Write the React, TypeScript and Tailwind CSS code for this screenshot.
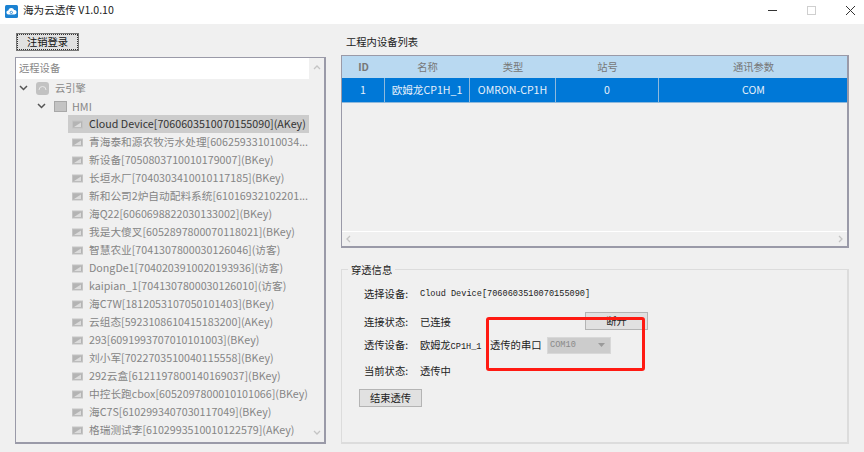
import React from "react";

const devices = [
  "青海泰和源农牧污水处理[606259331010034...",
  "新设备[7050803710010179007](BKey)",
  "长垣水厂[7040303410010117185](BKey)",
  "新和公司2炉自动配料系统[61016932102201...",
  "海Q22[6060698822030133002](BKey)",
  "我是大傻叉[6052897800070118021](BKey)",
  "智慧农业[7041307800030126046](访客)",
  "DongDe1[7040203910020193936](访客)",
  "kaipian_1[7041307800030126010](访客)",
  "海C7W[1812053107050101403](BKey)",
  "云组态[5923108610415183200](AKey)",
  "293[6091993707010101003](BKey)",
  "刘小军[7022703510040115558](BKey)",
  "292云盒[6121197800140169037](BKey)",
  "中控长跑cbox[6052097800010101066](BKey)",
  "海C7S[6102993407030117049](BKey)",
  "格瑞测试李[6102993510010122579](AKey)",
];

const ui = { fontFamily: '"Noto Sans CJK SC","Noto Sans",sans-serif' };
const mono = { fontFamily: '"Liberation Mono","Noto Sans CJK SC",monospace' };

function DevIcon() {
  return (
    <svg width="11" height="9" viewBox="0 0 11 9" className="shrink-0">
      <rect x="0" y="0.5" width="11" height="8" fill="#c4c4c4" />
      <rect x="1" y="1.5" width="9" height="6" fill="#b4b4b4" />
      <path d="M2 7 L9 2.5 V7 Z" fill="#dcdcdc" />
    </svg>
  );
}

function Chevron() {
  return (
    <svg width="9" height="6" viewBox="0 0 9 6" className="shrink-0">
      <path d="M1 1 L4.5 4.5 L8 1" fill="none" stroke="#555" strokeWidth="1.5" />
    </svg>
  );
}

const cols = "grid grid-cols-[43px_85px_86px_103px_189px]";

export default function App() {
  return (
    <div className="w-[864px] h-[452px] overflow-hidden bg-[#f0f0f0] flex flex-col text-[#222]" style={ui}>
      <div className="h-6 bg-white flex items-center shrink-0 pl-[5px]">
        <svg width="13" height="13" viewBox="0 0 13 13" className="shrink-0 -mt-[2px]">
          <rect width="13" height="13" rx="1.5" fill="#1b82d2" />
          <path d="M3.5 9.5 a2 2 0 0 1 -.2 -4 a3 3 0 0 1 5.8 -.6 a2.3 2.3 0 0 1 .4 4.6 Z" fill="#fff" />
          <circle cx="6.3" cy="7.4" r="1.2" fill="none" stroke="#1b82d2" strokeWidth=".8" />
        </svg>
        <span className="ml-[5px] text-[10.6px] leading-none text-[#222] -mt-[3px] whitespace-nowrap">海为云透传 V1.0.10</span>
        <div className="ml-auto flex items-center mr-[9px] -mt-[4px]">
          <div className="w-[9px] h-px bg-[#333]" />
          <div className="w-[9px] h-[9px] border border-[#cfcfcf] ml-[30px]" />
          <svg width="9" height="9" viewBox="0 0 9 9" className="ml-[30px]">
            <path d="M0 0 L9 9 M9 0 L0 9" stroke="#333" strokeWidth="1" />
          </svg>
        </div>
      </div>

      <div className="flex-1 flex min-h-0 pl-[15px] pb-2">
        <div className="w-[311px] shrink-0 flex flex-col pt-[9px]">
          <button className="ml-px w-[63px] h-[18px] bg-[#e1e1e1] border border-[#777] outline-1 outline-dotted outline-[#333] -outline-offset-2 text-[10.3px] leading-none text-[#111] flex items-center justify-center">
            注销登录
          </button>
          <div className="mt-[6px] flex-1 border border-[#9a9aa8] border-b-2 border-r-2 flex min-h-0">
            <div className="w-[293px] flex flex-col">
              <div className="h-[21px] bg-white flex items-center pl-[3px] text-[10.3px] text-[#888] leading-none shrink-0">远程设备</div>
              <div className="flex items-center h-[18px] pl-[3px] text-[10.3px] text-[#888]">
                <Chevron />
                <svg width="13" height="13" viewBox="0 0 13 13" className="ml-[8px]">
                  <rect width="13" height="13" rx="3" fill="#c2c2c2" />
                  <path d="M3 8 a3.5 3.5 0 0 1 7 0" fill="none" stroke="#e8e8e8" strokeWidth="1" />
                </svg>
                <span className="ml-[6px]">云引擎</span>
              </div>
              <div className="flex items-center h-[18px] pl-[21px] text-[10.8px] text-[#888]">
                <Chevron />
                <div className="ml-[8px] w-[13px] h-[11px] bg-[#c4c4c4] border border-[#a8a8a8]" />
                <span className="ml-[5px]">HMI</span>
              </div>
              <div className="ml-[52px] h-[18px] bg-[#cccccc] flex items-center pl-[4px] text-[10.7px] text-[#333] whitespace-nowrap">
                <DevIcon />
                <span className="ml-[6px]">Cloud Device[7060603510070155090](AKey)</span>
              </div>
              {devices.map((d) => (
                <div key={d} className="ml-[52px] h-[18px] flex items-center pl-[4px] text-[10.7px] text-[#858585] whitespace-nowrap">
                  <DevIcon />
                  <span className="ml-[6px]">{d}</span>
                </div>
              ))}
            </div>
            <div className="flex-1 flex flex-col justify-between items-center py-[7px] bg-[#f0f0f0]">
              <svg width="8" height="5" viewBox="0 0 8 5"><path d="M1 4 L4 1 L7 4" fill="none" stroke="#c4c4c4" strokeWidth="1.3" /></svg>
              <svg width="8" height="5" viewBox="0 0 8 5"><path d="M1 1 L4 4 L7 1" fill="none" stroke="#c4c4c4" strokeWidth="1.3" /></svg>
            </div>
          </div>
        </div>

        <div className="w-[508px] ml-[15px] shrink-0 flex flex-col">
          <div className="h-[31px] pt-[10px] pl-[5px] text-[10.3px] leading-[15px] text-[#222]">工程内设备列表</div>
          <div className="h-[193px] border border-[#9a9aa8] border-b-2 border-r-2 flex flex-col">
            <div className={`${cols} h-[22px] bg-[#b9d9f1] text-[10.3px] text-[#777] text-center items-center`}>
              <span className="font-bold">ID</span>
              <span>名称</span>
              <span>类型</span>
              <span>站号</span>
              <span>通讯参数</span>
            </div>
            <div className={`${cols} h-[25px] bg-[#0078d7] text-[10.6px] text-[#e6f0fa] text-center items-stretch border-b border-[#8fb9dc]`}>
              <span className="flex items-center justify-center border-r border-[#8fb9dc]">1</span>
              <span className="flex items-center justify-center border-r border-[#8fb9dc] whitespace-nowrap">欧姆龙CP1H_1</span>
              <span className="flex items-center justify-center border-r border-[#8fb9dc] whitespace-nowrap">OMRON-CP1H</span>
              <span className="flex items-center justify-center border-r border-[#8fb9dc]">0</span>
              <span className="flex items-center justify-center">COM</span>
            </div>
            <div className="flex-1" />
            <div className="h-[15px] border-t border-white flex items-center justify-between px-[4px] shrink-0">
              <svg width="5" height="8" viewBox="0 0 5 8"><path d="M4 1 L1 4 L4 7" fill="none" stroke="#c4c4c4" strokeWidth="1.3" /></svg>
              <svg width="5" height="8" viewBox="0 0 5 8"><path d="M1 1 L4 4 L1 7" fill="none" stroke="#c4c4c4" strokeWidth="1.3" /></svg>
            </div>
          </div>

          <div className="relative mt-[21px] flex-1 border border-[#dcdcdc] border-b-2 border-r-2 pl-[22px] pt-[15px] text-[10.3px] text-[#222]">
            <span className="absolute left-[6px] -top-[8px] bg-[#f0f0f0] px-[3px] leading-[15px]">穿透信息</span>
            <div className="flex items-center h-[18px]">
              <span className="w-[56px] whitespace-nowrap">选择设备:</span>
              <span className="text-[8.6px] whitespace-nowrap" style={mono}>Cloud Device[7060603510070155090]</span>
            </div>
            <div className="flex items-center h-[18px] mt-[10px]">
              <span className="w-[56px] whitespace-nowrap">连接状态:</span>
              <span className="whitespace-nowrap w-[31px]">已连接</span>
              <button className="ml-[134px] w-[63px] h-[18px] -mt-[2px] bg-[#e1e1e1] border border-[#b4b4b4] text-[10.3px] leading-none text-[#222] flex items-center justify-center">断开</button>
            </div>
            <div className="flex items-center h-[18px] mt-[5px]">
              <span className="w-[56px] whitespace-nowrap">透传设备:</span>
              <span className="w-[70px] text-[10.2px] whitespace-nowrap">欧姆龙<span className="text-[8.6px]" style={mono}>CP1H_1</span></span>
              <span className="whitespace-nowrap w-[57px]">透传的串口</span>
              <div className="w-[64px] h-[17px] bg-[#cccccc] border border-[#d8d8d8] flex items-center justify-between pl-[2px] pr-[5px]">
                <span className="text-[8.6px] text-[#8a8a8a]" style={mono}>COM10</span>
                <svg width="7" height="4" viewBox="0 0 7 4"><path d="M0 0 H7 L3.5 4 Z" fill="#9a9a9a" /></svg>
              </div>
            </div>
            <div className="flex items-center h-[18px] mt-[8px]">
              <span className="w-[56px] whitespace-nowrap">当前状态:</span>
              <span className="whitespace-nowrap">透传中</span>
            </div>
            <button className="block -ml-[5px] mt-[9px] w-[63px] h-[18px] bg-[#e1e1e1] border border-[#b4b4b4] text-[10.3px] leading-none text-[#222]">结束透传</button>
            <div className="absolute left-[144px] top-[47px] w-[159px] h-[54px] border-[3px] border-[#ff1a12] rounded-[3px]" />
          </div>
        </div>
      </div>
    </div>
  );
}
